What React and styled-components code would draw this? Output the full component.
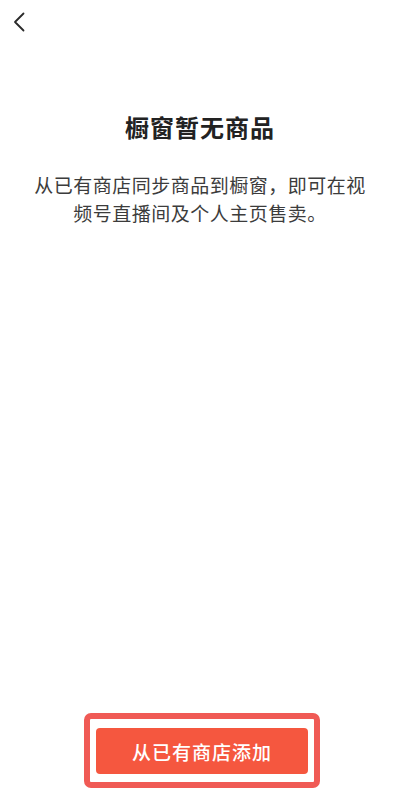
import React from "react";
import styled, { createGlobalStyle } from "styled-components";

const GlobalStyle = createGlobalStyle`
  html, body {
    margin: 0;
    padding: 0;
    background: #ffffff;
  }
  body {
    font-family: "Noto Sans CJK SC", "Noto Sans", sans-serif;
  }
`;

const App = () => {
  return (
    <Page>
      <GlobalStyle />
      <Header>
        <BackButton aria-label="返回">
          <svg width="12" height="20" viewBox="0 0 12 20" fill="none">
            <polyline
              points="10.5,1.5 2,10 10.5,18.5"
              stroke="#2a2a2a"
              strokeWidth="1.8"
              strokeLinecap="round"
              strokeLinejoin="round"
            />
          </svg>
        </BackButton>
      </Header>

      <Content>
        <Title>橱窗暂无商品</Title>
        <Description>
          从已有商店同步商品到橱窗，即可在视
          <br />
          频号直播间及个人主页售卖。
        </Description>
      </Content>

      <Footer>
        <Highlight>
          <AddButton type="button">从已有商店添加</AddButton>
        </Highlight>
      </Footer>
    </Page>
  );
};

const Page = styled.div`
  display: flex;
  flex-direction: column;
  height: 802px;
  width: 400px;
  background: #fff;
  overflow: hidden;
`;

const Header = styled.div`
  height: 44px;
  display: flex;
  align-items: flex-start;
  padding: 12px 0 0 13px;
  box-sizing: border-box;
`;

const BackButton = styled.button`
  background: none;
  border: none;
  padding: 0;
  display: flex;
  cursor: pointer;
`;

const Content = styled.div`
  flex: 1;
  display: flex;
  flex-direction: column;
  align-items: center;
  padding-top: 66px;
`;

const Title = styled.h1`
  margin: 0;
  font-size: 24px;
  line-height: 34px;
  font-weight: 700;
  color: #222;
  letter-spacing: 1px;
`;

const Description = styled.p`
  margin: 27px 0 0;
  font-size: 19px;
  line-height: 28px;
  color: #3c3c3c;
  text-align: center;
  letter-spacing: 0.5px;
`;

const Footer = styled.div`
  display: flex;
  justify-content: center;
  padding: 0 0 14px 4px;
`;

const Highlight = styled.div`
  border: 6px solid #f05a55;
  border-radius: 7px;
  padding: 9px 6px 8px;
  background: #fff;
`;

const AddButton = styled.button`
  width: 212px;
  height: 46px;
  border: none;
  border-radius: 4px;
  background: #f5573f;
  color: #fff;
  font-family: "Noto Sans CJK SC", "Noto Sans", sans-serif;
  font-size: 19px;
  font-weight: 500;
  letter-spacing: 1px;
  cursor: pointer;
`;

export default App;
